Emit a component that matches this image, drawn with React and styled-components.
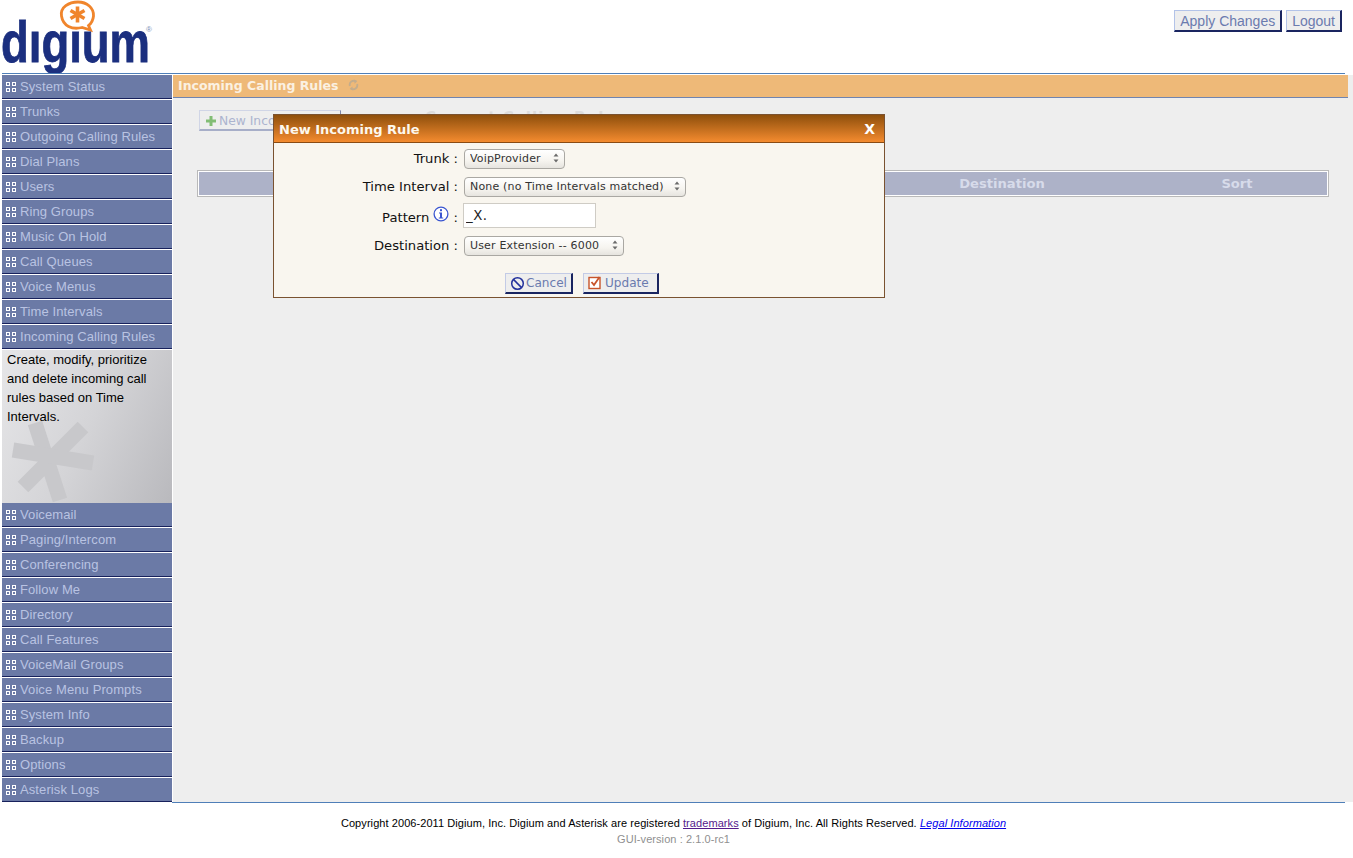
import React from 'react'
import styled, { createGlobalStyle } from 'styled-components'

const GlobalStyle = createGlobalStyle`
    html, body {
        margin: 0;
        padding: 0;
        background: #fff;
        overflow: hidden;
    }
    * { box-sizing: border-box; }
`

const topItems = ['System Status', 'Trunks', 'Outgoing Calling Rules', 'Dial Plans', 'Users', 'Ring Groups', 'Music On Hold', 'Call Queues', 'Voice Menus', 'Time Intervals', 'Incoming Calling Rules']
const bottomItems = ['Voicemail', 'Paging/Intercom', 'Conferencing', 'Follow Me', 'Directory', 'Call Features', 'VoiceMail Groups', 'Voice Menu Prompts', 'System Info', 'Backup', 'Options', 'Asterisk Logs']

function Logo() {
    return (
        <LogoSvg width="156" height="73" viewBox="0 0 156 73">
            <path d="M61.5 16 C60 7 69 2 78 2 C87 2 94 8 93.5 16 C93 21 90.5 24 88.5 25.5 L90.5 30 L82 27.5 C72 30 63 26 61.5 16 Z" fill="#fff" stroke="#f0852c" strokeWidth="2.8" />
            <g stroke="#f0852c" strokeWidth="3.6">
                <line x1="77.5" y1="6.5" x2="77.5" y2="22.5" />
                <line x1="70.5" y1="10.5" x2="84.5" y2="18.5" />
                <line x1="84.5" y1="10.5" x2="70.5" y2="18.5" />
            </g>
            <text x="1" y="62" textLength="149" lengthAdjust="spacingAndGlyphs" fontFamily="'Liberation Sans', sans-serif" fontWeight="700" fontSize="57" fill="#1b2f7f" stroke="#1b2f7f" strokeWidth="0.8">dıgıum</text>
            <text x="146" y="32" fontFamily="'Liberation Sans', sans-serif" fontSize="8" fill="#7d8fb8">®</text>
        </LogoSvg>
    )
}

function GridIcon() {
    return (
        <MenuIconSvg width="10" height="10" viewBox="0 0 10 10">
            <g fill="none" stroke="#fff" strokeWidth="1">
                <rect x="0.5" y="0.5" width="3" height="3" />
                <rect x="6.5" y="0.5" width="3" height="3" />
                <rect x="0.5" y="6.5" width="3" height="3" />
                <rect x="6.5" y="6.5" width="3" height="3" />
            </g>
        </MenuIconSvg>
    )
}

function Asterisk() {
    return (
        <Watermark width="170" height="153" viewBox="0 0 170 153">
            <g stroke="#c8c8cb" strokeWidth="15">
                <line x1="33" y1="73" x2="58" y2="150" />
                <line x1="81" y1="77" x2="21" y2="137" />
                <line x1="91" y1="113" x2="11" y2="100" />
            </g>
        </Watermark>
    )
}

function Arrows() {
    return (
        <ArrowSvg width="8" height="12" viewBox="0 0 8 12">
            <path d="M4 1.5 L6.5 4.5 H1.5 Z" fill="#6b6b6b" />
            <path d="M4 10.5 L6.5 7.5 H1.5 Z" fill="#6b6b6b" />
        </ArrowSvg>
    )
}

function SelectBox({ width, value }) {
    return (
        <SelectWrap $width={width}>
            <Select defaultValue={value}><option>{value}</option></Select>
            <Arrows />
        </SelectWrap>
    )
}

function App() {
    return (
        <Page>
            <GlobalStyle />
            <Header>
                <Logo />
                <TopButtons>
                    <TopButton>Apply Changes</TopButton>
                    <TopButton>Logout</TopButton>
                </TopButtons>
            </Header>
            <Rule />
            <Main>
                <Sidebar>
                    {topItems.map(name => <MenuItem key={name}><GridIcon />{name}</MenuItem>)}
                    <Panel>
                        <Asterisk />
                        <PanelText>Create, modify, prioritize and delete incoming call rules based on Time Intervals.</PanelText>
                    </Panel>
                    {bottomItems.map(name => <MenuItem key={name}><GridIcon />{name}</MenuItem>)}
                </Sidebar>
                <Content>
                    <TitleBar>
                        Incoming Calling Rules
                        <svg width="11" height="12" viewBox="0 0 12 12" fill="none" stroke="#c4ad8c" strokeWidth="2">
                            <path d="M2 7 C1 3 5 0 9 2" />
                            <path d="M10 5 C11 9 7 12 3 10" />
                            <path d="M7 0 L10 2.2 L7 4.5 Z" fill="#c4ad8c" stroke="none" />
                            <path d="M5 7.5 L2 9.8 L5 12 Z" fill="#c4ad8c" stroke="none" />
                        </svg>
                    </TitleBar>
                    <Toolbar>
                        <NewButton>
                            <svg width="10" height="10" viewBox="0 0 10 10"><path d="M3.5 0 H6.5 V3.5 H10 V6.5 H6.5 V10 H3.5 V6.5 H0 V3.5 H3.5 Z" fill="#82bd74" /></svg>
                            New Incoming Rule
                        </NewButton>
                        <FadedHeading>Current Calling Rules</FadedHeading>
                    </Toolbar>
                    <TableHead>
                        <span />
                        <HeadCell>Destination</HeadCell>
                        <HeadCell>Sort</HeadCell>
                    </TableHead>
                    <Dialog>
                        <DialogTitle>
                            New Incoming Rule
                            <CloseMark>X</CloseMark>
                        </DialogTitle>
                        <Form>
                            <FormRow $height={28}>
                                <Label>Trunk :</Label>
                                <SelectBox width={101} value="VoipProvider" />
                            </FormRow>
                            <FormRow $height={28}>
                                <Label>Time Interval :</Label>
                                <SelectBox width={222} value="None (no Time Intervals matched)" />
                            </FormRow>
                            <FormRow $height={31}>
                                <Label>
                                    Pattern
                                    <InfoIcon width="16" height="16" viewBox="0 0 16 16">
                                        <circle cx="8" cy="8" r="6.9" fill="#fff" stroke="#3a55d0" strokeWidth="1.3" />
                                        <rect x="7" y="3.2" width="2" height="2" fill="#3a55d0" />
                                        <path d="M6 6.5 H9 V11.5 H10.2 V12.6 H5.8 V11.5 H7 V7.6 H6 Z" fill="#3a55d0" />
                                    </InfoIcon>
                                    {' '}:
                                </Label>
                                <PatternInput defaultValue="_X." />
                            </FormRow>
                            <FormRow $height={28}>
                                <Label>Destination :</Label>
                                <SelectBox width={160} value="User Extension -- 6000" />
                            </FormRow>
                        </Form>
                        <DialogActions>
                            <ActionButton $width={68} $gap={1}>
                                <svg width="15" height="15" viewBox="0 0 15 15" fill="none" stroke="#23319c" strokeWidth="1.5">
                                    <circle cx="7.5" cy="7.5" r="5.8" />
                                    <line x1="3.4" y1="3.4" x2="11.6" y2="11.6" />
                                </svg>
                                Cancel
                            </ActionButton>
                            <ActionButton $width={76} $gap={3}>
                                <svg width="14" height="15" viewBox="0 0 14 15" fill="none">
                                    <rect x="1" y="1.5" width="11" height="11" fill="#fff" stroke="#c8542a" strokeWidth="1.4" />
                                    <path d="M3.5 6 L6 9 L11.5 1" stroke="#c8542a" strokeWidth="1.8" />
                                </svg>
                                Update
                            </ActionButton>
                        </DialogActions>
                    </Dialog>
                </Content>
            </Main>
            <Rule />
            <Footer>
                <div>
                    Copyright 2006-2011 Digium, Inc. Digium and Asterisk are registered <VisitedLink href="#">trademarks</VisitedLink> of Digium, Inc. All Rights Reserved. <LegalLink href="#">Legal Information</LegalLink>
                </div>
                <Version>GUI-version : 2.1.0-rc1</Version>
            </Footer>
        </Page>
    )
}

export default App

const Page = styled.div`
    width: 1353px;
    height: 858px;
    font-family: "Liberation Sans", Arial, sans-serif;
`

const Header = styled.div`
    height: 73px;
    display: flex;
    justify-content: space-between;
    align-items: flex-start;
    padding: 0 11px 0 0;
`

const LogoSvg = styled.svg`
    display: block;
`

const TopButtons = styled.div`
    display: flex;
    gap: 4px;
    padding-top: 10px;
`

const TopButton = styled.button`
    height: 22px;
    padding: 0 5px;
    font-family: "Liberation Sans", Arial, sans-serif;
    font-size: 14px;
    color: #6b7bae;
    background: #eeeeee;
    border-style: solid;
    border-width: 1px 2px 2px 1px;
    border-color: #b3c3e8 #1a2560 #1a2560 #b3c3e8;
`

const Rule = styled.div`
    height: 1px;
    margin: 0 8px 1px 2px;
    background: #4f7fb8;
`

const Main = styled.div`
    height: 727px;
    display: flex;
`

const Sidebar = styled.div`
    width: 173px;
    flex: none;
    padding: 0 1px 0 2px;
`

const MenuItem = styled.div`
    height: 25px;
    display: flex;
    align-items: center;
    padding: 0 0 1px 4px;
    font-size: 13px;
    letter-spacing: 0.1px;
    color: #b9c3e2;
    background: #6b7aa6;
    background-clip: padding-box;
    border-bottom: 1px solid #fff;
    box-shadow: inset 0 -1px 0 #17215c;
`

const MenuIconSvg = styled.svg`
    flex: none;
    margin-right: 4px;
`

const Panel = styled.div`
    height: 153px;
    position: relative;
    overflow: hidden;
    padding: 0 0 0 5px;
    background: linear-gradient(115deg, #e6e6e8 0%, #d4d4d7 50%, #b9b9bd 100%);
`

const PanelText = styled.div`
    position: relative;
    font-size: 13px;
    line-height: 19px;
    color: #000;
    width: 155px;
`

const Watermark = styled.svg`
    position: absolute;
    left: 0;
    top: 0;
`

const ArrowSvg = styled.svg`
    position: absolute;
    right: 5px;
    top: 4px;
    pointer-events: none;
`

const Content = styled.div`
    flex: 1;
    position: relative;
    background: #eeeeee;
`

const TitleBar = styled.div`
    width: 1175px;
    height: 23px;
    display: flex;
    align-items: center;
    gap: 10px;
    padding: 0 0 2px 5px;
    font-family: "DejaVu Sans", sans-serif;
    font-size: 12.5px;
    font-weight: 700;
    color: #fbf1e2;
    background: #eeb978;
    border-bottom: 1px solid #6f84b0;
`

const Toolbar = styled.div`
    display: flex;
    padding: 12px 0 0 26px;
    height: 72px;
`

const NewButton = styled.div`
    width: 142px;
    height: 21px;
    display: flex;
    align-items: center;
    gap: 3px;
    padding: 1px 0 0 6px;
    font-family: "DejaVu Sans", sans-serif;
    font-size: 12.3px;
    color: #acb4cf;
    background: #eeeeee;
    border-style: solid;
    border-width: 1px 1px 2px 1px;
    border-color: #d0d5e6 #7f87aa #a7aec8 #d0d5e6;
    white-space: nowrap;
    overflow: hidden;
`

const FadedHeading = styled.div`
    margin: -1px 0 0 84px;
    font-family: "DejaVu Sans", sans-serif;
    font-size: 15px;
    font-weight: 700;
    letter-spacing: 1px;
    color: #dcdcdc;
`

const TableHead = styled.div`
    width: 1132px;
    height: 27px;
    margin-left: 24px;
    display: grid;
    grid-template-columns: 660px 288px 1fr;
    align-items: center;
    background: #adb2c8;
    border: 1px solid #b9b9b9;
    box-shadow: inset 0 0 0 1px #fff;
`

const HeadCell = styled.div`
    text-align: center;
    font-family: "DejaVu Sans", sans-serif;
    font-size: 13.1px;
    font-weight: 700;
    color: #d7dbea;
`

const Dialog = styled.div`
    position: absolute;
    left: 100px;
    top: 39px;
    width: 612px;
    height: 184px;
    display: flex;
    flex-direction: column;
    background: #f9f6ef;
    border: 1px solid #7a5230;
`

const DialogTitle = styled.div`
    height: 28px;
    flex: none;
    display: flex;
    justify-content: space-between;
    align-items: center;
    padding: 1px 9px 0 5px;
    font-family: "DejaVu Sans", sans-serif;
    font-size: 13px;
    font-weight: 700;
    color: #fdf8ee;
    background: linear-gradient(#8e4f0c, #f48b2f);
    border-bottom: 1px solid #8a4b12;
`

const CloseMark = styled.span`
    font-size: 14px;
    color: #fff;
`

const Form = styled.div`
    padding-top: 1px;
`

const FormRow = styled.div`
    height: ${props => props.$height}px;
    display: flex;
    align-items: center;
    gap: 6px;
`

const Label = styled.div`
    width: 184px;
    text-align: right;
    font-family: "DejaVu Sans", sans-serif;
    font-size: 13.15px;
    color: #111;
`

const InfoIcon = styled.svg`
    vertical-align: 0;
    margin-left: 4px;
`

const SelectWrap = styled.div`
    position: relative;
    width: ${props => props.$width}px;
    height: 20px;
`

const Select = styled.select`
    width: 100%;
    height: 100%;
    appearance: none;
    padding: 0 0 0 5px;
    font-family: "DejaVu Sans", sans-serif;
    font-size: 11px;
    letter-spacing: 0.17px;
    color: #333;
    background: linear-gradient(#ffffff, #f6f4ef 60%, #e6e4df);
    border: 1px solid #aaa8a3;
    border-radius: 4px;
`

const PatternInput = styled.input`
    width: 133px;
    height: 25px;
    margin-left: -1px;
    padding: 0 2px;
    font-family: "DejaVu Sans", sans-serif;
    font-size: 13.3px;
    letter-spacing: 0.5px;
    color: #222;
    background: #fff;
    border: 1px solid #cfccc5;
    outline: none;
`

const DialogActions = styled.div`
    display: flex;
    gap: 10px;
    padding: 14px 0 0 231px;
`

const ActionButton = styled.button`
    width: ${props => props.$width}px;
    height: 21px;
    display: flex;
    align-items: center;
    gap: ${props => props.$gap}px;
    padding: 0 0 0 4px;
    font-family: "DejaVu Sans", sans-serif;
    font-size: 12.1px;
    color: #6b7bae;
    background: #eeeeee;
    border-style: solid;
    border-width: 1px 2px 2px 1px;
    border-color: #c3cbe6 #1a2560 #1a2560 #c3cbe6;
`

const Footer = styled.div`
    padding-top: 11px;
    text-align: center;
    font-size: 11px;
    letter-spacing: 0.07px;
    line-height: 16px;
    color: #000;
    width: 1347px;
`

const VisitedLink = styled.a`
    color: #551a8b;
`

const LegalLink = styled.a`
    color: #0000ee;
    font-style: italic;
`

const Version = styled.div`
    color: #8f8f8f;
`
